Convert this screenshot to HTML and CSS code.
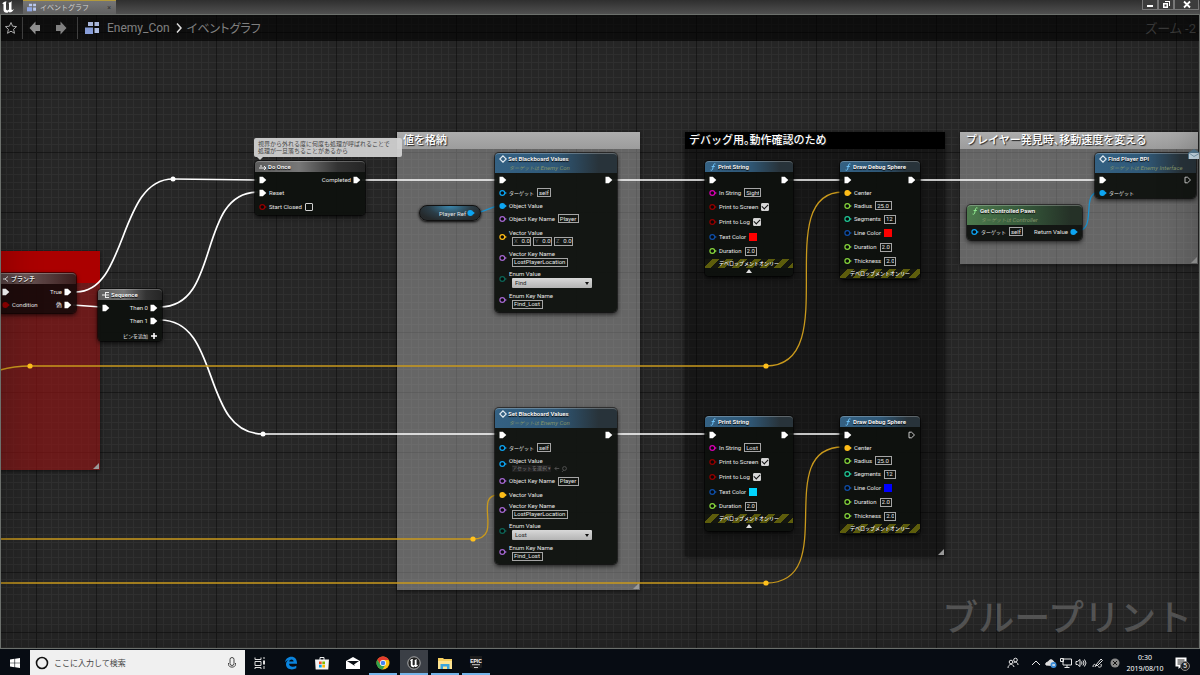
FILE: index.html
```
<!DOCTYPE html>
<html lang="ja">
<head>
    <meta charset="UTF-8">
    <title>Enemy_Con - イベントグラフ</title>
    <link rel="stylesheet" href="styles.css">
</head>
<body>
    <!-- shared shapes -->
    <svg class="defs" aria-hidden="true">
        <symbol id="exec" viewBox="0 0 8 8"><path d="M.5.800h3.300L7.300 4 3.800 7.200H.5z" fill="#fff"/></symbol>
        <symbol id="exec-open" viewBox="0 0 8 8"><path d="M1 1.200h2.500l3 2.800-3 2.800H1z" fill="none" stroke="#ddd" stroke-width=".9"/></symbol>
        <symbol id="ring" viewBox="0 0 8 8"><circle cx="3.300" cy="4" r="2.400" fill="#080808" stroke="currentColor" stroke-width="1.200"/><path d="M6.200 2.700 7.800 4 6.200 5.300z" fill="currentColor"/></symbol>
        <symbol id="dot" viewBox="0 0 8 8"><circle cx="3.300" cy="4" r="2.900" fill="currentColor"/><path d="M6 2.500 7.800 4 6 5.500z" fill="currentColor"/></symbol>
        <symbol id="diamond" viewBox="0 0 8 8"><path d="M4 .8 7.200 4 4 7.200.8 4z" fill="none" stroke="#dfe9f0" stroke-width="1.200"/></symbol>
        <symbol id="func" viewBox="0 0 8 8"><path d="M6.500 1C5 .3 4.600 1.500 4.300 3L3.700 6C3.500 7.200 2.500 7.500 1.600 7M2.600 3.500h3.200" fill="none" stroke="currentColor" stroke-width="1"/></symbol>
        <symbol id="graph-icon" viewBox="0 0 16 14"><g fill="#b9c8ee"><path d="M4 1h5v4H4zM10.500 1H15v4h-4.500zM10.500 7H15v5h-4.500z"/><path d="M1 6.500h8V13H1z" fill="#8fa6e4"/></g></symbol>
        <symbol id="unreal" viewBox="0 0 14 14"><path d="M1 4C2 2 4 1.500 5.500 1.500L5 3v6.500l1.500 1L8 9.500V3.500L7.300 3C9 2.500 10 2 11 1c-.4 1-.5 1.500-.5 2.500v6l.8.500 1.700-1C12 11.500 10 12.500 8.500 12.500l-.7-1-1.300 1.200C4 13 2.500 11.500 2.500 10V4.500c0-.9-.7-.9-1.500-.5z" fill="currentColor"/></symbol>
    </svg>

    <header class="titlebar">
        <svg class="ue-logo" viewBox="0 0 14 14"><use href="#unreal"/></svg>
        <div class="tab">
            <svg class="tab-icon"><use href="#graph-icon"/></svg>
            <span>イベントグラフ</span>
            <button class="tab-close" aria-label="閉じる">×</button>
        </div>
        <div class="window-buttons">
            <button aria-label="最小化"><svg viewBox="0 0 10 9"><path d="M2 5h6v2H2z"/></svg></button>
            <button aria-label="元に戻す"><svg viewBox="0 0 10 9"><path d="M4 1h5v5H8V2H4zM2 3h5v5H2zM3.500 4.500v2h2v-2z" fill-rule="evenodd"/></svg></button>
            <button class="wide" aria-label="閉じる"><svg viewBox="0 0 10 9"><path d="M2 1.500 8 7.500M8 1.500 2 7.500" stroke="#fff" stroke-width="1.800"/></svg></button>
        </div>
    </header>

    <main class="graph">
        <svg class="backdrop" aria-hidden="true">
            <defs>
                <pattern id="grid" x="36" y="18" width="60" height="60" patternUnits="userSpaceOnUse">
                    <path d="M7 0h1v60H7zM15 0h1v60h-1zM22 0h1v60h-1zM30 0h1v60h-1zM37 0h1v60h-1zM45 0h1v60h-1zM52 0h1v60h-1zM0 7h60v1H0zM0 15h60v1H0zM0 22h60v1H0zM0 30h60v1H0zM0 37h60v1H0zM0 45h60v1H0zM0 52h60v1H0z" fill="#fff" fill-opacity=".04"/>
                    <path d="M0 0h1v60H0zM0 0h60v1H0z" fill="#000" fill-opacity=".4"/>
                </pattern>
            </defs>
            <rect width="100%" height="100%" fill="url(#grid)"/>
        </svg>

        <section class="comment red"><h2></h2></section>
        <section class="comment store"><h2>値を格納</h2></section>
        <section class="comment debug"><h2>デバッグ用。動作確認のため</h2></section>
        <section class="comment speed"><h2>プレイヤー発見時、移動速度を変える</h2></section>

        <div class="watermark">ブループリント</div>

        <svg class="wires" aria-hidden="true">
            <g class="wire-exec">
                <path d="M76 278C128 278 118 165 173 165L257 166"/>
                <path d="M73 291 101 293"/>
                <path d="M160 293C222 293 196 178 258 178"/>
                <path d="M160 306C222 306 200 420 263 420H497"/>
                <path d="M362 166H497M612 166H707M789 166H843M916 166H1097"/>
                <path d="M612 420H707M789 420H843"/>
            </g>
            <g class="wire-vector">
                <path d="M0 356Q14 352 30 352H766C846 352 768 178 843 178"/>
                <path d="M0 525H473C504 525 473 481 498 481"/>
                <path d="M0 569H766C842 569 770 433 843 433"/>
            </g>
            <g class="wire-object">
                <path d="M474 199C484 199 491 192 500 192"/>
                <path d="M1076 217C1099 217 1079 178 1100 178"/>
            </g>
            <g fill="#fff"><circle cx="173" cy="165" r="2.500"/><circle cx="263" cy="420" r="2.500"/></g>
            <g fill="#ffc01c"><circle cx="30" cy="352" r="2.600"/><circle cx="766" cy="352" r="2.600"/><circle cx="473" cy="525" r="2.600"/><circle cx="766" cy="569" r="2.600"/></g>
        </svg>

        <nav class="toolbar">
            <button aria-label="お気に入り"><svg viewBox="0 0 14 14"><path d="m7 1.500 1.600 3.700 4 .4-3 2.700.9 4L7 10.200l-3.500 2.100.9-4-3-2.700 4-.4z" fill="none" stroke="#c4c4c4"/></svg></button>
            <i class="rule"></i>
            <button class="arrow" aria-label="戻る"><svg viewBox="0 0 14 14"><path d="M1.500 7 7.500.500v3.500H12v6H7.500v3.500z" fill="#9a9a9a"/></svg></button>
            <button class="arrow" aria-label="進む"><svg viewBox="0 0 14 14"><path d="M12.500 7 6.500.500v3.500H2v6h4.500v3.500z" fill="#8a8a8a"/></svg></button>
            <i class="rule"></i>
            <svg class="crumb-icon"><use href="#graph-icon"/></svg>
            <a href="#">Enemy_Con</a>
            <svg class="crumb-sep" viewBox="0 0 8 12"><path d="m2 1.500 4 4.500-4 4.500" fill="none" stroke="#eee" stroke-width="1.500"/></svg>
            <a href="#">イベントグラフ</a>
            <span class="zoom">ズーム -2</span>
        </nav>

        <p class="bubble">視界から外れる度に何度も処理が呼ばれることで<br>処理が一旦落ちることがあるから</p>

        <article class="node grey branch">
            <h3><svg><path d="M1 4h2l3-2.500M3 4l3 2.500" fill="none" stroke="#ddd"/></svg>ブランチ</h3>
            <div class="row"><svg class="pin"><use href="#exec"/></svg><span class="out">True<svg class="pin"><use href="#exec"/></svg></span></div>
            <div class="row"><svg class="pin bool"><use href="#dot"/></svg><span>Condition</span><span class="out">偽<svg class="pin"><use href="#exec"/></svg></span></div>
        </article>

        <article class="node grey sequence">
            <h3><svg><path d="M0 4h3M3.500 1v6M3.500 1.500H7M3.500 4H7M3.500 6.500H7" fill="none" stroke="#eee"/></svg>Sequence</h3>
            <div class="row"><svg class="pin"><use href="#exec"/></svg><span class="out">Then 0<svg class="pin"><use href="#exec"/></svg></span></div>
            <div class="row"><span class="out">Then 1<svg class="pin"><use href="#exec"/></svg></span></div>
            <div class="row h18"><button class="out jp">ピンを追加<svg class="pin"><path d="M1 4h6M4 1v6" stroke="#fff" stroke-width="1.600"/></svg></button></div>
        </article>

        <article class="node grey do-once">
            <h3><svg><path d="M0 5h7M5 3l2 2-2 2M1 3h2" fill="none" stroke="#eee"/></svg>Do Once</h3>
            <div class="row"><svg class="pin"><use href="#exec"/></svg><span class="out">Completed<svg class="pin"><use href="#exec"/></svg></span></div>
            <div class="row"><svg class="pin"><use href="#exec"/></svg><span>Reset</span></div>
            <div class="row h15"><svg class="pin bool"><use href="#ring"/></svg><label>Start Closed <input type="checkbox"></label></div>
        </article>

        <article class="pill"><span>Player Ref</span><svg class="pin object"><use href="#dot"/></svg></article>

        <article class="node blue blackboard first">
            <h3><svg><use href="#diamond"/></svg>Set Blackboard Values</h3>
            <h4><span class="jp">ターゲットは</span> Enemy Con</h4>
            <div class="row"><svg class="pin"><use href="#exec"/></svg><span class="out"><svg class="pin"><use href="#exec"/></svg></span></div>
            <div class="row"><svg class="pin object"><use href="#ring"/></svg><label><span class="jp">ターゲット</span> <input class="w14" value="self"></label></div>
            <div class="row"><svg class="pin object"><use href="#dot"/></svg><span>Object Value</span></div>
            <div class="row"><svg class="pin name"><use href="#ring"/></svg><label>Object Key Name <input class="w21" value="Player"></label></div>
            <div class="row h24"><svg class="pin vector"><use href="#ring"/></svg>
                <div class="stack"><span>Vector Value</span>
                    <div class="xyz"><label><b>X</b><input value="0.0"></label><label><b>Y</b><input value="0.0"></label><label><b>Z</b><input value="0.0"></label></div>
                </div>
            </div>
            <div class="row h18"><svg class="pin name"><use href="#ring"/></svg><label class="stack">Vector Key Name<input class="w56" value="LostPlayerLocation"></label></div>
            <div class="row h24"><svg class="pin enum"><use href="#ring"/></svg><label class="stack">Enum Value<select><option>Find</option></select></label></div>
            <div class="row h18"><svg class="pin name"><use href="#ring"/></svg><label class="stack">Enum Key Name<input class="w31" value="Find_Lost"></label></div>
        </article>

        <article class="node blue blackboard second">
            <h3><svg><use href="#diamond"/></svg>Set Blackboard Values</h3>
            <h4><span class="jp">ターゲットは</span> Enemy Con</h4>
            <div class="row"><svg class="pin"><use href="#exec"/></svg><span class="out"><svg class="pin"><use href="#exec"/></svg></span></div>
            <div class="row"><svg class="pin object"><use href="#ring"/></svg><label><span class="jp">ターゲット</span> <input class="w14" value="self"></label></div>
            <div class="row h20"><svg class="pin object"><use href="#ring"/></svg>
                <div class="stack"><span>Object Value</span>
                    <div class="asset"><button>アセットを選択 ▾</button><svg viewBox="0 0 16 8"><path d="M6 4H1m2-2L1 4l2 2M11 6l-2 2" fill="none" stroke="#555"/><circle cx="12" cy="4" r="2.200" fill="none" stroke="#555"/></svg></div>
                </div>
            </div>
            <div class="row h14"><svg class="pin name"><use href="#ring"/></svg><label>Object Key Name <input class="w21" value="Player"></label></div>
            <div class="row"><svg class="pin vector"><use href="#dot"/></svg><span>Vector Value</span></div>
            <div class="row h18"><svg class="pin name"><use href="#ring"/></svg><label class="stack">Vector Key Name<input class="w56" value="LostPlayerLocation"></label></div>
            <div class="row h24"><svg class="pin enum"><use href="#ring"/></svg><label class="stack">Enum Value<select><option>Lost</option></select></label></div>
            <div class="row h18"><svg class="pin name"><use href="#ring"/></svg><label class="stack">Enum Key Name<input class="w31" value="Find_Lost"></label></div>
        </article>

        <article class="node blue print first">
            <h3><svg><use href="#func"/></svg>Print String</h3>
            <div class="row"><svg class="pin"><use href="#exec"/></svg><span class="out"><svg class="pin"><use href="#exec"/></svg></span></div>
            <div class="row"><svg class="pin string"><use href="#ring"/></svg><label>In String <input class="w17" value="Sight"></label></div>
            <div class="row h15"><svg class="pin bool"><use href="#ring"/></svg><label>Print to Screen <input type="checkbox" checked></label></div>
            <div class="row h15"><svg class="pin bool"><use href="#ring"/></svg><label>Print to Log <input type="checkbox" checked></label></div>
            <div class="row h15"><svg class="pin struct"><use href="#ring"/></svg><span>Text Color</span><button class="swatch red-swatch" aria-label="Text Color"></button></div>
            <div class="row h14"><svg class="pin float"><use href="#ring"/></svg><label>Duration <input class="w12" value="2.0"></label></div>
            <div class="dev-only">デベロップメントオンリー</div>
            <button class="expand" aria-label="折りたたむ"></button>
        </article>

        <article class="node blue print second">
            <h3><svg><use href="#func"/></svg>Print String</h3>
            <div class="row"><svg class="pin"><use href="#exec"/></svg><span class="out"><svg class="pin"><use href="#exec"/></svg></span></div>
            <div class="row"><svg class="pin string"><use href="#ring"/></svg><label>In String <input class="w17" value="Lost"></label></div>
            <div class="row h15"><svg class="pin bool"><use href="#ring"/></svg><label>Print to Screen <input type="checkbox" checked></label></div>
            <div class="row h15"><svg class="pin bool"><use href="#ring"/></svg><label>Print to Log <input type="checkbox" checked></label></div>
            <div class="row h15"><svg class="pin struct"><use href="#ring"/></svg><span>Text Color</span><button class="swatch cyan-swatch" aria-label="Text Color"></button></div>
            <div class="row h14"><svg class="pin float"><use href="#ring"/></svg><label>Duration <input class="w12" value="2.0"></label></div>
            <div class="dev-only">デベロップメントオンリー</div>
            <button class="expand" aria-label="折りたたむ"></button>
        </article>

        <article class="node blue sphere first">
            <h3><svg><use href="#func"/></svg>Draw Debug Sphere</h3>
            <div class="row"><svg class="pin"><use href="#exec"/></svg><span class="out"><svg class="pin"><use href="#exec"/></svg></span></div>
            <div class="row"><svg class="pin vector"><use href="#dot"/></svg><span>Center</span></div>
            <div class="row"><svg class="pin float"><use href="#ring"/></svg><label>Radius <input class="w17" value="25.0"></label></div>
            <div class="row h14"><svg class="pin int"><use href="#ring"/></svg><label>Segments <input class="w12" value="12"></label></div>
            <div class="row h14"><svg class="pin struct"><use href="#ring"/></svg><span>Line Color</span><button class="swatch red-swatch" aria-label="Line Color"></button></div>
            <div class="row h14"><svg class="pin float"><use href="#ring"/></svg><label>Duration <input class="w12" value="2.0"></label></div>
            <div class="row h14"><svg class="pin float"><use href="#ring"/></svg><label>Thickness <input class="w12" value="2.0"></label></div>
            <div class="dev-only">デベロップメントオンリー</div>
        </article>

        <article class="node blue sphere second">
            <h3><svg><use href="#func"/></svg>Draw Debug Sphere</h3>
            <div class="row"><svg class="pin"><use href="#exec"/></svg><span class="out"><svg class="pin"><use href="#exec-open"/></svg></span></div>
            <div class="row"><svg class="pin vector"><use href="#dot"/></svg><span>Center</span></div>
            <div class="row"><svg class="pin float"><use href="#ring"/></svg><label>Radius <input class="w17" value="25.0"></label></div>
            <div class="row h14"><svg class="pin int"><use href="#ring"/></svg><label>Segments <input class="w12" value="12"></label></div>
            <div class="row h14"><svg class="pin struct"><use href="#ring"/></svg><span>Line Color</span><button class="swatch blue-swatch" aria-label="Line Color"></button></div>
            <div class="row h14"><svg class="pin float"><use href="#ring"/></svg><label>Duration <input class="w12" value="2.0"></label></div>
            <div class="row h14"><svg class="pin float"><use href="#ring"/></svg><label>Thickness <input class="w12" value="2.0"></label></div>
            <div class="dev-only">デベロップメントオンリー</div>
        </article>

        <article class="node blue find-player">
            <h3><svg><use href="#diamond"/></svg>Find Player BPI</h3>
            <h4><span class="jp">ターゲットは</span> Enemy Interface</h4>
            <div class="row"><svg class="pin"><use href="#exec"/></svg><span class="out"><svg class="pin"><use href="#exec-open"/></svg></span></div>
            <div class="row"><svg class="pin object"><use href="#dot"/></svg><span class="jp">ターゲット</span></div>
            <svg class="mail" viewBox="0 0 12 11"><path d="M0 4 6 0l6 4v6H0z" fill="#54788f"/><path d="M1 4h11v6H1z" fill="#c9dbe6"/><path d="m1 4 5 3.500L12 4" fill="none" stroke="#7d9db0"/></svg>
        </article>

        <article class="node green pawn">
            <h3><svg><use href="#func"/></svg>Get Controlled Pawn</h3>
            <h4><span class="jp">ターゲットは</span> Controller</h4>
            <div class="row"><svg class="pin object"><use href="#ring"/></svg><label><span class="jp">ターゲット</span> <input class="w14" value="self"></label><span class="out">Return Value<svg class="pin object"><use href="#dot"/></svg></span></div>
        </article>
    </main>

    <footer class="taskbar">
        <button class="start" aria-label="スタート"><svg viewBox="0 0 12 12"><path d="M1 2.500 5.500 1.800V5.700H1zM6.100 1.700 11 1v4.700H6.100zM1 6.300h4.500v3.900L1 9.500zM6.100 6.300H11V11l-4.900-.7z" fill="#fff"/></svg></button>
        <div class="search">
            <svg viewBox="0 0 14 14"><circle cx="7" cy="7" r="5.500" fill="none" stroke="#111" stroke-width="1.600"/></svg>
            <input type="search" placeholder="ここに入力して検索" aria-label="検索">
            <svg viewBox="0 0 14 14"><rect x="5" y="1.500" width="4" height="8" rx="2" fill="none" stroke="#444"/><path d="M3.500 7v1.500C3.500 12 10.500 12 10.500 8.500V7" fill="none" stroke="#444"/></svg>
        </div>
        <button aria-label="タスクビュー"><svg viewBox="0 0 14 14"><path d="M2 1.500v2h6v-2M2 5.500h6v4H2zM2 13v-1.500h6V13M11 1v2M11 10v3" fill="none" stroke="#ddd"/><path d="M10 4.500h2v4h-2z" fill="#ddd"/></svg></button>
        <button aria-label="Edge"><svg viewBox="0 0 14 14"><path d="M1 6.500C1.500 3 4 .8 7.300.8c3.900 0 5.900 3 5.700 7H5c.2 3.400 4.600 3.500 7.300 1.900v2.600C8.500 14.400 2 13.700 2 8.300 2 6 3.200 4.500 5 3.700 3.300 4 1.800 5.200 1 6.500zM5.100 5.600h4.500C9.600 2.700 5.600 2.800 5.100 5.600z" fill="#0a84dd"/></svg></button>
        <button aria-label="Store"><svg viewBox="0 0 14 14"><path d="M5 4V1.500h4V4" fill="none" stroke="#eee"/><path d="M0 3.500h14l-.7 10H.7z" fill="#f4f4f4"/><path d="M4 5.500h2.700v2.700H4z" fill="#f25022"/><path d="M7.300 5.500H10v2.700H7.300z" fill="#7fba00"/><path d="M4 8.800h2.700v2.700H4z" fill="#00a4ef"/><path d="M7.300 8.800H10v2.700H7.300z" fill="#ffb900"/></svg></button>
        <button aria-label="メール"><svg viewBox="0 0 14 14"><path d="M0 5 7 1l7 4v8H0z" fill="#fff"/><path d="M1 5h12L8 8.500 9 10z" fill="#0b0f16"/></svg></button>
        <button class="running" aria-label="Chrome"><svg viewBox="0 0 14 14"><circle cx="7" cy="7" r="6.500" fill="#fbc116"/><path d="M1.300 3.800a6.500 6.500 0 0 1 11.500.2H7L4.500 8.500z" fill="#e33b2e"/><path d="M1.300 3.800A6.500 6.500 0 0 0 6.500 13.500L9.500 8.500 7 10 4.500 8.800z" fill="#30a14e"/><circle cx="7" cy="7" r="3" fill="#fff"/><circle cx="7" cy="7" r="2.300" fill="#4285f4"/></svg></button>
        <button class="running active" aria-label="Unreal Editor"><svg viewBox="0 0 14 14"><circle cx="7" cy="7" r="6.200" fill="#222" stroke="#ccc" stroke-width=".8"/><g transform="translate(2 2) scale(.72)" color="#fff"><use href="#unreal" width="14" height="14"/></g></svg></button>
        <button class="running" aria-label="エクスプローラー"><svg viewBox="0 0 14 14"><path d="M0 2h5l1 1h8v10H0z" fill="#f6cf60"/><path d="M0 5h14v8H0z" fill="#fde391"/><path d="M2.500 13V8h9v5h-2.500v-2.500h-4V13z" fill="#3ba4dc"/></svg></button>
        <button class="running" aria-label="Epic Games"><svg viewBox="0 0 14 14"><path d="M1 0h12v11.500L7 14l-6-2.500z" fill="#1d1d1d"/><text x="7" y="6.500" text-anchor="middle" class="epic">EPIC</text><path d="M3 8.700h8M5 11.500h4" stroke="#ccc"/></svg></button>
        <div class="tray">
            <svg viewBox="0 0 12 12"><circle cx="4" cy="5" r="1.800"/><circle cx="8.500" cy="3" r="1.800"/><path d="M1 11c0-4 5-5 6-1M6.500 6C8 4.500 11 5 11 8"/></svg>
            <svg viewBox="0 0 12 12" class="chevron"><path d="m2 8 4-4 4 4"/></svg>
            <svg viewBox="0 0 12 12"><path d="M1 8C0 5 3 5 3.500 5 4 2 8 2 8.500 5c2 0 2.500 3 .5 3.500z" fill="#ddd"/><circle cx="8.500" cy="8" r="3" fill="#3b8bd6" stroke="none"/><path d="M7 8h3M9 7v2"/></svg>
            <svg viewBox="0 0 12 12"><path d="M3 2h8.500v6H3zM7 8v2.500M4.500 10.500h5M.5 1.500h3v3h-3z"/></svg>
            <svg viewBox="0 0 12 12"><path d="M1 4.500h1.500L5 2.500v7L2.500 7.500H1zM6.500 4.500q1 1.500 0 3M8 3.500q2 2.500 0 5M9.500 2.500q3 3.500 0 7"/></svg>
            <svg viewBox="0 0 12 12" class="pen"><path d="m4 8 5-6 1.500 1.500L5 9zM1 10c0-4 4-3 2 0M6 9.500C8 11 10 10 9 7"/></svg>
            <svg viewBox="0 0 12 12" class="blocked"><circle cx="6" cy="6" r="4.500" fill="#8a8a8a" stroke="none"/><path d="m4 4 4 4M8 4 4 8" stroke="#111"/></svg>
            <time datetime="2019-08-10T00:30">0:30<br>2019/08/10</time>
            <button class="notify" aria-label="通知"><svg viewBox="0 0 12 12"><path d="M.5.500h11v9H6L3.500 12V9.500h-3z" fill="#fff" stroke="none"/><path d="M2.500 3h7M2.500 5h7M2.500 7h5" stroke="#222"/></svg><span>5</span></button>
        </div>
    </footer>
</body>
</html>
```
FILE: styles.css
```
* {
    box-sizing: border-box;
}
body {
    margin: 0;
    height: 100vh;
    display: flex;
    flex-direction: column;
    overflow: hidden;
    background: #262626;
    color: #e6e6e6;
    font-family: Roboto, "Noto Sans CJK JP", sans-serif;
}
h2, h3, h4, p {
    margin: 0;
}
button {
    padding: 0;
    border: 0;
    background: none;
    color: inherit;
    font: inherit;
}
a {
    color: inherit;
    text-decoration: none;
}
.defs {
    position: absolute;
    width: 0;
    height: 0;
}

/* title bar */
.titlebar {
    flex: none;
    display: flex;
    align-items: flex-start;
    height: 15px;
    background: linear-gradient(#2f2f2f, #505050);
    border-bottom: 1px solid #6c706c;
}
.ue-logo {
    width: 16px;
    height: 14px;
    margin-right: 7px;
    color: #fff;
}
.tab {
    display: flex;
    align-items: center;
    gap: 3px;
    width: 93px;
    height: 14px;
    padding: 0 5px 0 3px;
    background: linear-gradient(#757575, #606060);
    border-top: 1px solid #b39a3c;
    color: #d0d0d0;
    font-size: 7px;
    line-height: 12px;
}
.tab-icon {
    width: 11px;
    height: 9px;
}
.tab-close {
    margin-left: auto;
    color: #333;
}
.window-buttons {
    display: flex;
    margin-left: auto;
    margin-right: 1px;
}
.window-buttons button {
    display: flex;
    justify-content: center;
    width: 16px;
    height: 10px;
    border: 1px solid #777;
    border-top: 0;
    background: #3c3c3c;
}
.window-buttons .wide {
    width: 25px;
}
.window-buttons svg {
    width: 10px;
    height: 9px;
    fill: #fff;
}

/* graph canvas */
.graph {
    flex: 1;
    position: relative;
    margin-top: -1px;
    overflow: hidden;
    background: #262626;
}
.graph::after {
    content: "";
    position: absolute;
    inset: 0;
    border: 1px solid #6c706c;
    box-shadow: inset 0 0 40px rgba(0, 0, 0, 0.25);
    pointer-events: none;
}
.backdrop, .wires {
    position: absolute;
    inset: 0;
    width: 100%;
    height: 100%;
}
.wires path {
    fill: none;
}
.wire-exec {
    stroke: #fff;
    stroke-width: 1.7;
}
.wire-vector {
    stroke: #c9991c;
    stroke-width: 1.3;
}
.wire-object {
    stroke: #1a93d0;
    stroke-width: 1.3;
}
.toolbar {
    position: absolute;
    top: 0;
    left: 0;
    right: 0;
    height: 27px;
    display: flex;
    align-items: center;
    padding: 0 4px;
    background: rgba(0, 0, 0, 0.6);
    color: #8a8a8a;
    font-size: 12px;
    font-feature-settings: "palt";
}
.toolbar button, .toolbar button svg {
    display: block;
    width: 14px;
    height: 14px;
}
.toolbar .arrow {
    margin-left: 1px;
}
.toolbar .arrow + .arrow {
    margin-left: 12px;
}
.rule {
    width: 1px;
    height: 22px;
    margin: 0 4px;
    background: #444;
}
.arrow + .rule {
    margin: 0 6px 0 9px;
}
.crumb-icon {
    width: 16px;
    height: 14px;
    margin-right: 7px;
}
.crumb-sep {
    width: 8px;
    height: 12px;
    margin: 0 4px 0 5px;
}
.zoom {
    margin-left: auto;
    color: #3c3c3c;
    font-size: 13px;
}
.watermark {
    position: absolute;
    right: 8px;
    bottom: 5px;
    color: #545454;
    font-size: 36px;
    font-weight: 500;
    line-height: 50px;
}

/* comment boxes */
.comment {
    position: absolute;
    background: rgba(190, 190, 190, 0.42);
    box-shadow: 0 1px 4px rgba(0, 0, 0, 0.6);
}
.comment::after {
    content: "";
    position: absolute;
    right: 1px;
    bottom: 1px;
    border: 3px solid;
    border-color: transparent #999 #999 transparent;
}
.comment h2 {
    height: 17px;
    padding-left: 6px;
    background: linear-gradient(#adadad, #9c9c9c);
    color: #fff;
    font-size: 11px;
    font-weight: 500;
    line-height: 17px;
    white-space: nowrap;
    font-feature-settings: "halt";
    text-shadow: 1px 1px 1px #222;
}
.comment.red {
    left: 0;
    top: 237px;
    width: 100px;
    height: 219px;
    background: rgba(145, 20, 20, 0.65);
}
.comment.red h2 {
    height: 32px;
    background: #ab0000;
}
.comment.store {
    left: 397px;
    top: 118px;
    width: 243px;
    height: 458px;
}
.comment.debug {
    left: 685px;
    top: 118px;
    width: 260px;
    height: 424px;
    background: rgba(0, 0, 0, 0.42);
}
.comment.debug h2 {
    padding-left: 4px;
    background: #000;
}
.comment.speed {
    left: 960px;
    top: 118px;
    width: 238px;
    height: 132px;
}
.bubble {
    position: absolute;
    left: 254px;
    top: 124px;
    width: 148px;
    height: 19px;
    padding: 2px 4px;
    border-radius: 2px;
    background: rgba(212, 212, 212, 0.93);
    color: #444;
    font-size: 6px;
    line-height: 7px;
    white-space: nowrap;
}
.bubble::after {
    content: "";
    position: absolute;
    left: 3px;
    top: 19px;
    border: 3px solid transparent;
    border-top-color: #d0d0d0;
    border-bottom: 0;
}

/* nodes */
.node {
    position: absolute;
    border-radius: 4px;
    background: rgba(14, 17, 14, 0.94);
    box-shadow: 0 0 0 1px rgba(0, 0, 0, 0.5), 0 2px 5px rgba(0, 0, 0, 0.8);
    font-size: 6px;
    line-height: 8px;
    white-space: nowrap;
}
.node h3 {
    display: flex;
    align-items: center;
    gap: 1px;
    height: 11px;
    margin-bottom: 1px;
    padding-left: 4px;
    border-radius: 4px 4px 0 0;
    border-top: 1px solid rgba(255, 255, 255, 0.25);
    color: #f0f0f0;
    font-size: 6px;
    font-weight: 700;
    text-shadow: 0 1px 1px #000;
}
.node h3 svg {
    width: 8px;
    height: 8px;
}
.node h4 {
    height: 9px;
    margin-top: -1px;
    padding-left: 14px;
    font-size: 6px;
    font-style: italic;
    font-weight: 400;
    line-height: 7px;
    color: #82946a;
}
.grey h3 {
    background: linear-gradient(90deg, #5c5c5c, #777 40%, #333 75%, #252525);
}
.blue h3, .blue h4 {
    background: linear-gradient(90deg, #346183, #2f5877 50%, #28333a 85%);
}
.blue h3 svg {
    color: #6cc0f5;
}
.green h3, .green h4 {
    background: linear-gradient(90deg, #4d7a4d, #35583a 50%, #253127 90%);
}
.green h3 svg {
    color: #8fe88f;
}
.row {
    display: flex;
    align-items: center;
    gap: 2px;
    height: 13px;
    padding: 0 4px;
}
.h14 {
    height: 14px;
}
.h15 {
    height: 15px;
}
.h18 {
    height: 18px;
}
.h20 {
    height: 20px;
}
.h24 {
    height: 24px;
}
.row label {
    display: flex;
    align-items: center;
    gap: 3px;
}
.out {
    display: flex;
    align-items: center;
    gap: 2px;
    margin-left: auto;
}
.row .stack {
    display: flex;
    flex-direction: column;
    align-items: flex-start;
    gap: 0;
}
.jp {
    font-size: 5px;
}
.pin {
    flex: none;
    width: 8px;
    height: 8px;
}
.object {
    color: #0da5f2;
}
.name {
    color: #a467d0;
}
.vector {
    color: #fdbd18;
}
.enum {
    color: #0d6456;
}
.bool {
    color: #930000;
}
.string {
    color: #d800b4;
}
.struct {
    color: #0f4fa8;
}
.float {
    color: #86d63c;
}
.int {
    color: #1fc795;
}
.node input {
    height: 9px;
    margin: 0;
    padding: 0 1px 1px;
    border: 1px solid #a5a5a5;
    border-radius: 0;
    background: transparent;
    color: #e6e6e6;
    font: 6px/6px Roboto, sans-serif;
}
.node .stack > input, .stack select, .stack .xyz, .stack .asset {
    margin-left: 3px;
}
.w12 {
    width: 12px;
}
.w14 {
    width: 14px;
}
.w17 {
    width: 17px;
}
.w21 {
    width: 21px;
}
.w31 {
    width: 31px;
}
.w56 {
    width: 56px;
}
.node input[type="checkbox"] {
    appearance: none;
    display: block;
    width: 8px;
    height: 8px;
    padding: 0;
    border-radius: 1px;
    border-color: #d0d0d0;
}
.node input[type="checkbox"]:checked {
    background: #d8d8d8;
}
.node input[type="checkbox"]:checked::before {
    content: "";
    display: block;
    width: 5px;
    height: 3px;
    border-left: 1px solid #111;
    border-bottom: 1px solid #111;
    transform: rotate(-45deg);
}
.xyz {
    display: flex;
    gap: 2px;
}
.xyz label {
    width: 19px;
    height: 9px;
    gap: 1px;
    padding-left: 1px;
    border: 1px solid #a5a5a5;
}
.xyz b {
    color: #666;
    font-weight: 400;
}
.xyz input {
    width: 12px;
    height: 7px;
    border: 0;
    text-align: right;
}
.node select {
    appearance: none;
    width: 80px;
    height: 10px;
    padding: 0 3px;
    border: 0;
    border-radius: 1px;
    background: linear-gradient(#d8d8d8, #b4b4b4);
    color: #222;
    font: 6px/10px Roboto, sans-serif;
}
.stack:has(select) {
    position: relative;
}
.stack:has(select)::after {
    content: "";
    position: absolute;
    right: 3px;
    bottom: 3px;
    border: 2px solid transparent;
    border-top: 3px solid #111;
    border-bottom: 0;
}
.asset {
    display: flex;
    align-items: center;
    gap: 3px;
    height: 7px;
}
.asset button {
    background: #202020;
    color: #777;
    font-size: 5px;
    line-height: 7px;
}
.asset svg {
    width: 14px;
    height: 7px;
}
.swatch {
    width: 8px;
    height: 8px;
    margin-left: 1px;
}
.red-swatch {
    background: #f00;
}
.cyan-swatch {
    background: #00d4ff;
}
.blue-swatch {
    background: #00f;
}
.dev-only {
    height: 9px;
    margin-top: 1px;
    background: repeating-linear-gradient(135deg, #14160f 0, #14160f 5px, #5d5d0c 5px, #5d5d0c 10px);
    color: #fff;
    font-size: 5px;
    font-weight: 500;
    line-height: 8px;
    text-align: center;
    text-shadow: 0 0 2px #000;
}
.expand {
    display: block;
    width: 0;
    margin: 1px auto 0;
    border: 3px solid transparent;
    border-top: 0;
    border-bottom: 4px solid #ddd;
}

.branch {
    left: -2px;
    top: 259px;
    width: 78px;
    height: 40px;
    background: rgba(24, 10, 10, 0.92);
}
.branch h3 {
    background: linear-gradient(90deg, #503c3c, #6a5555 35%, #3a1c1c);
}
.sequence {
    left: 98px;
    top: 275px;
    width: 64px;
    height: 52px;
}
.do-once {
    left: 255px;
    top: 147px;
    width: 110px;
    height: 54px;
}
.blackboard {
    left: 495px;
    width: 122px;
}
.blackboard.first {
    top: 139px;
    height: 159px;
}
.blackboard.second {
    top: 394px;
    height: 156px;
}
.print {
    left: 705px;
    width: 88px;
    height: 115px;
}
.sphere {
    left: 840px;
    width: 80px;
    height: 118px;
}
.print.first, .sphere.first {
    top: 147px;
}
.print.second, .sphere.second {
    top: 402px;
}
.find-player {
    left: 1095px;
    top: 139px;
    width: 101px;
    height: 45px;
}
.mail {
    position: absolute;
    right: -4px;
    top: -4px;
    width: 12px;
    height: 11px;
}
.pawn {
    left: 967px;
    top: 191px;
    width: 115px;
    height: 35px;
}
.pill {
    position: absolute;
    left: 419px;
    top: 191px;
    display: flex;
    align-items: center;
    justify-content: flex-end;
    gap: 1px;
    width: 62px;
    height: 16px;
    padding-right: 5px;
    border: 1px solid #111;
    border-radius: 8px;
    background: radial-gradient(ellipse at 50% 0, #3a87ae, #2b3d47 50%, #25292b 80%);
    box-shadow: 0 1px 3px #000;
    font-size: 6px;
}

/* taskbar */
.taskbar {
    flex: none;
    display: flex;
    align-items: stretch;
    height: 26px;
    padding-top: 1px;
    background: #070c13;
}
.taskbar > button {
    display: flex;
    align-items: center;
    justify-content: center;
    width: 30px;
    margin-right: 1px;
    border-bottom: 2px solid transparent;
}
.taskbar > button svg {
    width: 14px;
    height: 14px;
    margin-top: 2px;
}
.taskbar > .start {
    margin-right: 0;
}
.taskbar > .start svg {
    width: 12px;
    height: 12px;
}
.taskbar > .running {
    width: 28px;
    margin-right: 3px;
    border-bottom-color: #76b5ea;
}
.taskbar > .active {
    background: #3b3f46;
}
.epic {
    fill: #fff;
    font: bold 5px "Liberation Sans", sans-serif;
}
.search {
    display: flex;
    align-items: center;
    gap: 5px;
    width: 215px;
    padding: 0 6px 0 5px;
    background: #f0f0f0;
}
.search svg {
    flex: none;
    width: 14px;
    height: 14px;
}
.search input {
    flex: 1;
    min-width: 0;
    padding: 0;
    border: 0;
    outline: 0;
    background: none;
    font: 8px "Noto Sans CJK JP", sans-serif;
}
.search input::placeholder {
    color: #444;
}
.tray {
    display: flex;
    align-items: center;
    gap: 3px;
    margin-left: auto;
    padding-right: 13px;
}
.tray svg {
    width: 12px;
    height: 12px;
    fill: none;
    stroke: #e8e8e8;
}
.tray .chevron {
    margin-left: 8px;
}
.tray .pen, .tray .blocked {
    margin-left: 2px;
}
.tray time {
    width: 38px;
    margin: 0 8px 0 2px;
    color: #fff;
    font-family: "Noto Sans", sans-serif;
    font-size: 7px;
    line-height: 11px;
    text-align: center;
}
.notify {
    position: relative;
    height: 12px;
}
.notify svg {
    display: block;
}
.notify span {
    position: absolute;
    left: 5px;
    top: 4px;
    width: 10px;
    height: 10px;
    border: 1px solid #888;
    border-radius: 50%;
    background: #222;
    color: #fff;
    font-size: 7px;
    line-height: 8px;
}
```
